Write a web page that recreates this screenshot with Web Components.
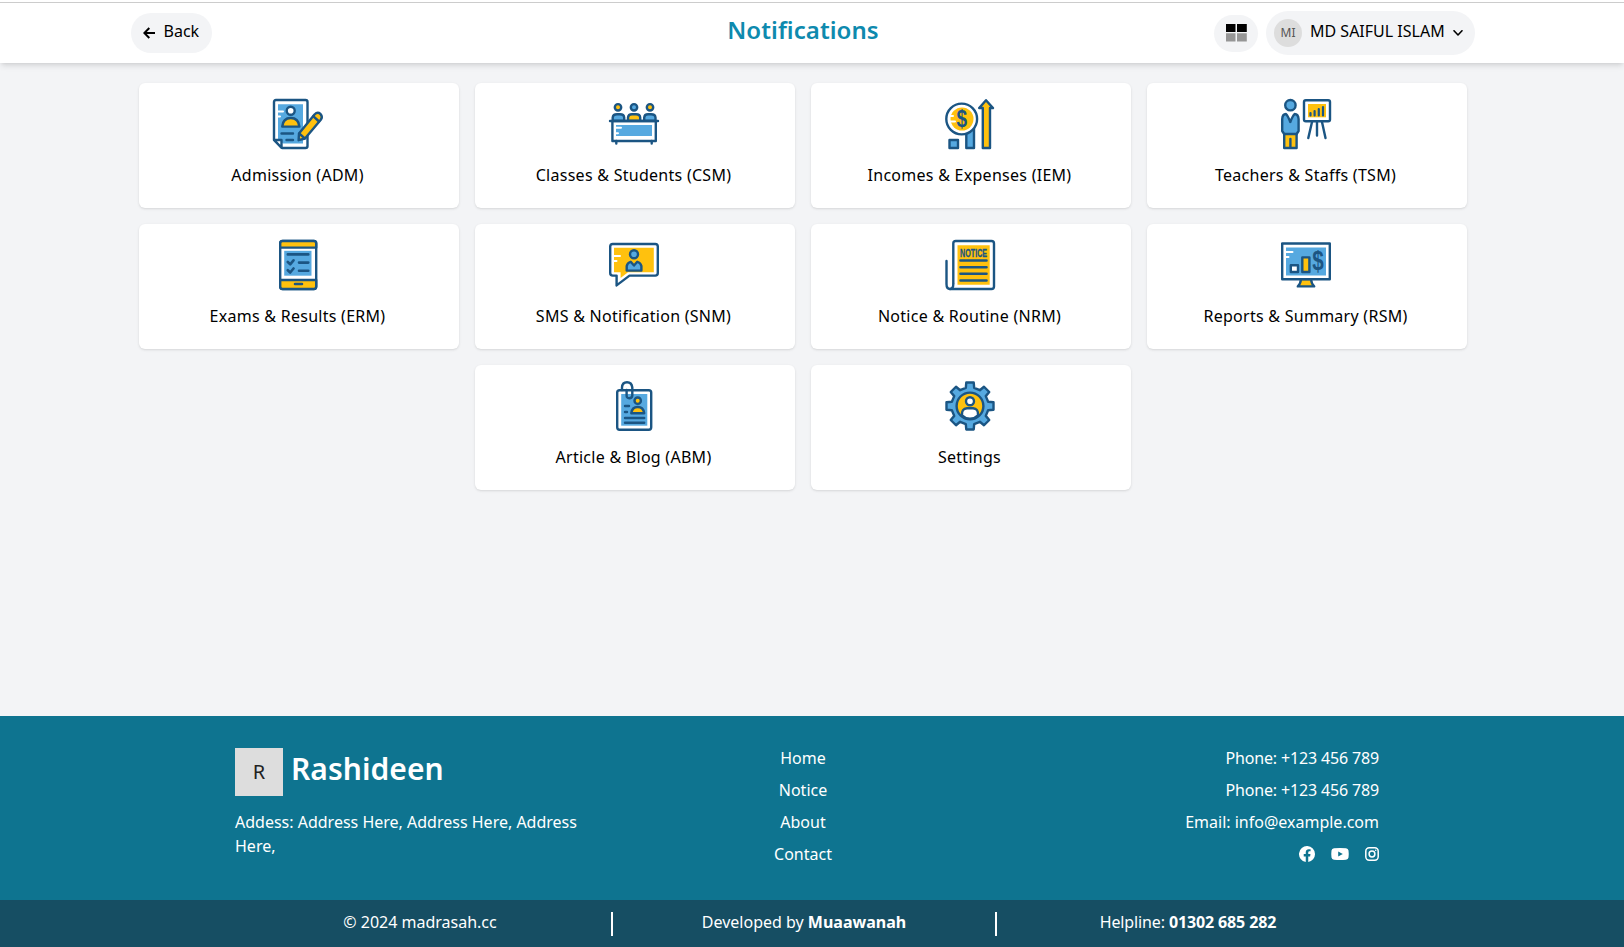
<!DOCTYPE html>
<html lang="en">
<head>
<meta charset="utf-8">
<title>Notifications</title>
<style>
html,body{margin:0;height:100%}
body{font:16px/24px "Noto Sans",sans-serif;color:#000;background:#f3f4f6;overflow:hidden}
</style>
</head>
<body>
<app-page>
  <app-header slot="header" heading="Notifications" user="MD SAIFUL ISLAM" initials="MI"></app-header>
  <module-card icon="admission">Admission (ADM)</module-card>
  <module-card icon="classes">Classes &amp; Students (CSM)</module-card>
  <module-card icon="incomes">Incomes &amp; Expenses (IEM)</module-card>
  <module-card icon="teachers">Teachers &amp; Staffs (TSM)</module-card>
  <module-card icon="exams">Exams &amp; Results (ERM)</module-card>
  <module-card icon="sms">SMS &amp; Notification (SNM)</module-card>
  <module-card icon="notice">Notice &amp; Routine (NRM)</module-card>
  <module-card icon="reports">Reports &amp; Summary (RSM)</module-card>
  <module-card icon="article">Article &amp; Blog (ABM)</module-card>
  <module-card icon="settings">Settings</module-card>
  <app-footer slot="footer"></app-footer>
</app-page>
<script>
const gearPoints = () => {
  const p = [];
  for (let i = 0; i < 8; i++) {
    for (const [r, d] of [[18.6, -13], [23.8, -9], [23.8, 9], [18.6, 13]]) {
      const a = (i * 45 + d) * Math.PI / 180;
      p.push((25 + r * Math.sin(a)).toFixed(2) + ',' + (25 - r * Math.cos(a)).toFixed(2));
    }
  }
  return p.join(' ');
};

// Classes: d = dark outline, b/y/w = blue/yellow/white fill, o = outlined shape, wl = white highlight
const ICONS = {
  admission: `
    <path class="o w" d="M3 1H32.5Q34.5 1 34.5 3V47Q34.5 49 32.5 49H9L1 41V3Q1 1 3 1Z"/>
    <path class="b" d="M5 5.2H30V44.5H10L5 39.5Z"/><path class="wl" d="M4 12.4H10M4 17.5H7"/>
    <circle class="o w" cx="17.7" cy="11.7" r="4"/>
    <path class="o y" d="M9.2 27.6Q10 19 17.8 19T26.4 27.6Z"/>
    <path class="d" d="M8.5 34.5H20M13.5 41H20"/>
    <path class="o w" d="M1.2 41H8.5V48.8Z"/>
    <path class="o y" d="M25.6 41.2L26 34.5L41.5 15.5Q44.5 12.5 47.5 15Q50 18 47.8 20.8L32 39.5Z"/>
    <path class="d" d="M40.2 17.2L46 22.5M26.2 34.5L31.8 39.3"/>`,
  classes: `
    <g class="o"><circle class="y" cx="9" cy="8.3" r="3.2"/><circle class="b" cx="25" cy="8.3" r="3.2"/><circle class="y" cx="41" cy="8.3" r="3.2"/>
    <path class="b" d="M3.7 22V18.5Q4 15.2 8 15.2H11Q15 15.2 15.2 18.5V22Z"/><path class="y" d="M19 22V18.5Q19.3 15.2 23 15.2H27Q31 15.2 31.2 18.5V22Z"/><path class="b" d="M35.2 22V18.5Q35.5 15.2 39 15.2H42Q46.3 15.2 46.5 18.5V22Z"/>
    <path class="w" d="M3.4 22H46.8V42H3.4Z"/></g>
    <path class="d" d="M1 22H49M7.3 42V44.5M42.7 42V44.5"/><path class="b" d="M7 26H43V37H7Z"/><path class="wl" d="M6 28.8H12M6 34.3H9"/>`,
  incomes: `
    <path class="o b" d="M21.3 29V49H29V29ZM4.5 41H13V49H4.5Z"/><path class="o y" d="M37.8 49V9H34.2L41 1.2L48 9H45V49Z"/>
    <circle class="o w" cx="16.7" cy="20" r="15.4"/><circle class="y" cx="17" cy="20" r="11.5"/><path class="wl" d="M4 17H8M4 22.5H10" />
    <text x="16.8" y="28" font-size="23" textLength="10.6" lengthAdjust="spacingAndGlyphs">$</text>`,
  teachers: `
    <circle class="o b" cx="9.4" cy="6.2" r="5.2"/>
    <path class="o y" d="M3.2 34H15.6V49H3.2Z"/><path class="d" d="M9.4 40V48"/>
    <path class="o b" d="M1.2 20Q1.5 15 5 15Q7 17 9.3 23Q11.6 17 13.6 15Q17.2 15 17.6 20V32L15.6 35H3.2L1.2 32Z"/>
    <path class="d" d="M31 23L27.3 39M36 23V36.5M41 23L44.5 39"/>
    <rect class="o w" x="23" y="1.3" width="26" height="21" rx="1.8"/><path class="y" d="M27 5H45V18.3H27Z"/>
    <path class="d" style="stroke-width:2.2" d="M29.5 16.5V14M33.6 16.5V12M37.8 16.5V10M42 16.5V8"/>`,
  exams: `
    <rect class="o w" x="7.2" y="1" width="36" height="48" rx="2.4"/><path class="o y" d="M7.2 7.6V3.4Q7.2 1 9.6 1H40.8Q43.2 1 43.2 3.4V7.6ZM7.2 40H43.2V46.6Q43.2 49 40.8 49H9.6Q7.2 49 7.2 46.6Z"/>
    <path class="b" d="M11.2 10.8H38.5V35.7H11.2Z"/>
    <path class="d" style="stroke-width:2.6" d="M14.8 14.4H35.3M26 22.6H35.3M26 30.8H35.3M22 44H29M14.8 22L17.2 24.3L20.5 20.3M14.8 30.2L17.2 32.5L20.5 28.5"/>`,
  sms: `
    <path class="o w" d="M3.8 4H46.2Q48.8 4 48.8 6.6V33Q48.8 35.6 46.2 35.6H20.5L7.6 45.4V35.6H3.8Q1.2 35.6 1.2 33V6.6Q1.2 4 3.8 4Z"/>
    <path class="y" d="M5 7.8H44.8V32.2H19L11.6 38V32.2H5Z"/><path class="wl" d="M4 16H11M4 21H7.5"/>
    <circle class="o b" cx="25" cy="14.2" r="4"/><path class="o b" d="M17.7 30.6V26Q18.5 22.5 21.7 21.8L25 25.5L28.3 21.8Q31.5 22.5 32.4 26V30.6Z"/>`,
  notice: `
    <path class="o w" d="M8.3 43V3.5Q8.3 1 10.8 1H46.5Q49 1 49 3.5V46.5Q49 49 46.5 49H5"/><path class="d" d="M1.5 21V44Q1.5 49 5 49Q8.3 49 8.3 44"/>
    <path class="y" d="M12.5 5.2H44.7V44.8H12.5Z"/><text x="28.6" y="16.6" font-size="11.4" textLength="27" lengthAdjust="spacingAndGlyphs" stroke="#1b5583" stroke-width=".3">NOTICE</text>
    <path class="d" style="stroke-width:2.6" d="M15.5 20.5H41.5M15.5 27.2H41.5M15.5 33.8H41.5M15.5 40.5H41.5"/>`,
  reports: `
    <path class="o y" d="M20 39H30Q30.5 44 33.2 46.4H16.8Q19.5 44 20 39Z"/><path class="o w" d="M1.2 3.5H48.8V39.2H1.2Z"/><path class="b" d="M5 7.4H45V35.4H5Z"/><path class="wl" d="M4 12H11.5M4 17H7.5"/>
    <path class="o w" d="M9.8 25.3H17V32H9.8Z"/><path class="o y" d="M21.3 17.4H28.4V32H21.3Z"/>
    <text x="37" y="30" font-size="27" textLength="11.5" lengthAdjust="spacingAndGlyphs">$</text>`,
  article: `
    <rect class="o w" x="8.2" y="9.2" width="34" height="39.5" rx="2.4"/><path class="b" d="M12.2 13H38.3V44.7H12.2Z"/>
    <path class="d" d="M16 25H20M16 31H18M16 37H35.2M16 41.8H35.2"/>
    <circle class="o y" cx="28.7" cy="19.7" r="3.2"/><path class="o y" d="M22.3 32.2Q23 26 28.7 26T35.2 32.2Z"/>
    <path d="M13 9V6.5Q13.3 1.2 18 1.2T23.3 6.5V14.5Q23 17.2 20.3 17.2T17.6 14.5V9" fill="none" stroke="#1b5583" stroke-width="2.4" stroke-linecap="round"/>`,
  settings: `
    <polygon class="o b" points="${gearPoints()}"/><circle class="o y" cx="25" cy="25" r="13.4"/>
    <circle class="o w" cx="25" cy="20.2" r="4"/><path class="o w" d="M17 34.3Q16.5 27.5 22 27.3H28Q33.5 27.5 33 34.3Q29.5 37.8 25 37.8T17 34.3Z"/>`
};

class ModuleIcon extends HTMLElement {
  connectedCallback() {
    this.attachShadow({mode: 'open'}).innerHTML = `<style>
      :host{display:block;width:50px;height:50px}
      svg{display:block;overflow:visible}
      .b{fill:#56a9e0}.y{fill:#ffc10e}.w{fill:#fff}
      .o,.d{stroke:#1b5583;stroke-width:2.4;stroke-linejoin:round;stroke-linecap:round}
      .d{fill:none}
      .wl{fill:none;stroke:#fff;stroke-width:2;stroke-linecap:round}
      text{font-family:"Liberation Sans",sans-serif;font-weight:700;fill:#1b5583;text-anchor:middle}
    </style><svg width="50" height="50" viewBox="0 0 50 50">${ICONS[this.getAttribute('name')]}</svg>`;
  }
}
customElements.define('module-icon', ModuleIcon);

class ModuleCard extends HTMLElement {
  connectedCallback() {
    this.attachShadow({mode: 'open'}).innerHTML = `<style>
      :host{display:flex;flex-direction:column;align-items:center;box-sizing:border-box;width:320px;height:125px;padding:16px 2px 16px 0;
        background:#fff;border-radius:6px;box-shadow:0 1px 3px rgba(0,0,0,.1),0 1px 2px -1px rgba(0,0,0,.1);cursor:pointer}
      .label{margin:14px 1px 0 0;letter-spacing:.27px;white-space:nowrap}
    </style><module-icon name="${this.getAttribute('icon')}"></module-icon><div class="label"><slot></slot></div>`;
  }
}
customElements.define('module-card', ModuleCard);

class AppHeader extends HTMLElement {
  connectedCallback() {
    this.attachShadow({mode: 'open'}).innerHTML = `<style>
      :host{display:block;box-sizing:border-box;height:63px;padding:3px 18px 0 0;background:linear-gradient(#fff 2px,#ccc 2px,#ccc 3px,#fff 3px);box-shadow:0 4px 6px -1px rgba(0,0,0,.1),0 2px 4px -2px rgba(0,0,0,.1)}
      .bar{width:1344px;height:60px;margin:0 auto;display:grid;grid-template-columns:1fr auto 1fr;align-items:center}
      .pill{display:flex;align-items:center;box-sizing:border-box;background:#f3f4f6;border-radius:22px}
      .back{width:81px;height:40px;padding:0 0 0 12px;gap:9px}
      .back span,.user b{padding-bottom:5px;font-weight:400}
      .back span{margin-left:-.5px}
      h1{margin:0;padding-bottom:6px;font-size:24px;line-height:32px;font-weight:600;letter-spacing:.06px;color:#0e8aae}
      .right{display:flex;justify-content:flex-end;align-items:center;gap:8px}
      .apps{width:44px;height:37px;justify-content:center;padding-bottom:2px;margin-top:1px}
      .user{width:209px;height:44px;padding-left:8px}
      .avatar{width:28px;height:28px;border-radius:50%;background:#ddd;color:#555;font-size:12px;line-height:28px;text-align:center;margin-right:8px}
      .user b{width:133px;white-space:nowrap;margin-right:10px}
    </style>
    <div class="bar">
      <div><div class="pill back"><svg width="12" height="12" viewBox="0 0 12 12" fill="none" stroke="#000" stroke-width="2"><path d="M12 6H1.5M6.3 1L1.3 6L6.3 11"/></svg><span>Back</span></div></div>
      <h1>${this.getAttribute('heading')}</h1>
      <div class="right">
        <div class="pill apps"><svg width="21" height="18" viewBox="0 0 21 18"><path d="M0 0H9.5V8H0ZM11 0H20.8V8H11Z"/><path fill="#969696" d="M0 9.3H9.5V17.5H0ZM11 9.3H20.8V17.5H11Z"/></svg></div>
        <div class="pill user"><div class="avatar">${this.getAttribute('initials')}</div><b>${this.getAttribute('user')}</b><svg width="10" height="6" viewBox="0 0 10 6" fill="none" stroke="#000" stroke-width="1.6" stroke-linecap="round" stroke-linejoin="round"><path d="M1 .8L5 5L9 .8"/></svg></div>
      </div>
    </div>`;
  }
}
customElements.define('app-header', AppHeader);

class AppFooter extends HTMLElement {
  connectedCallback() {
    this.attachShadow({mode: 'open'}).innerHTML = `<style>
      :host{display:block;color:#fff}
      .top{box-sizing:border-box;height:184px;padding:32px 18px 0 0;background:#0e7490}
      .bottom{box-sizing:border-box;height:47px;padding:12px 16px 0 0;background:#164e63}
      .cols{display:grid;grid-template-columns:repeat(3,384px);justify-content:center}
      .org{padding-left:8px}
      .brand{display:flex;align-items:center;gap:8px;height:48px;margin-bottom:14px}
      .logo{width:48px;height:48px;background:#ddd;color:#222;font-size:20px;line-height:48px;text-align:center}
      .name{font-size:30px;line-height:36px;font-weight:600;letter-spacing:.05px;padding-bottom:6px}
      .addr{width:360px}
      .links,.contact{display:flex;flex-direction:column;gap:8px;margin-top:-2px}
      .links{align-items:center}.contact{align-items:flex-end}
      .phone{letter-spacing:-.15px}
      .social{display:flex;gap:16px;height:24px;align-items:center}
      .bottom .cols>div{height:24px;text-align:center}
      .bottom span{display:block;margin-top:-2px}
      .bottom .num{letter-spacing:-.13px}
      .bottom .cols>div+div{box-shadow:-1px 0 0 #fff,inset 1px 0 0 #fff}
      b{font-weight:700}
    </style>
    <div class="top"><div class="cols">
      <div class="org"><div class="brand"><div class="logo">R</div><div class="name">Rashideen</div></div><div class="addr">Addess: Address Here, Address Here, Address Here,</div></div>
      <div class="links"><div>Home</div><div>Notice</div><div>About</div><div>Contact</div></div>
      <div class="contact"><div class="phone">Phone: +123 456 789</div><div class="phone">Phone: +123 456 789</div><div>Email: info@example.com</div>
        <div class="social">
          <svg width="16" height="16" viewBox="0 0 16 16" fill="#fff"><path d="M16 8.05A8 8 0 1 0 6.75 16v-5.6H4.72V8.05h2.03V6.28c0-2 1.2-3.13 3.02-3.13.88 0 1.8.16 1.8.16v1.98h-1.02c-1 0-1.3.62-1.3 1.25v1.51h2.22l-.36 2.33H9.25V16A8 8 0 0 0 16 8.05Z"/></svg>
          <svg width="18" height="16" viewBox="0 0 18 16"><path fill="#fff" fill-rule="evenodd" d="M3 2.2Q9 1.6 15 2.2Q17.2 2.4 17.5 4.5Q18 8 17.5 11.5Q17.2 13.6 15 13.8Q9 14.4 3 13.8Q.8 13.6.5 11.5Q0 8 .5 4.5Q.8 2.4 3 2.2ZM7.2 5.4V10.6L11.8 8Z"/></svg>
          <svg width="14" height="16" viewBox="0 0 14 16" fill="none" stroke="#fff" stroke-width="1.5"><rect x=".8" y="1.8" width="12.4" height="12.4" rx="3.4"/><circle cx="7" cy="8" r="2.9"/><circle cx="10.7" cy="4.3" r=".8" fill="#fff" stroke="none"/></svg>
        </div></div>
    </div></div>
    <div class="bottom"><div class="cols"><div><span>© 2024 madrasah.cc</span></div><div><span>Developed by <b>Muaawanah</b></span></div><div><span class="num">Helpline: <b>01302 685 282</b></span></div></div></div>`;
  }
}
customElements.define('app-footer', AppFooter);

class AppPage extends HTMLElement {
  connectedCallback() {
    this.attachShadow({mode: 'open'}).innerHTML = `<style>
      :host{display:flex;flex-direction:column;height:947px}
      main{flex:1;padding:20px 18px 0 0}
      .cards{width:1328px;margin:0 auto;display:flex;flex-wrap:wrap;justify-content:center;gap:16px}
    </style><slot name="header"></slot><main><div class="cards"><slot></slot></div></main><slot name="footer"></slot>`;
  }
}
customElements.define('app-page', AppPage);
</script>
</body>
</html>
